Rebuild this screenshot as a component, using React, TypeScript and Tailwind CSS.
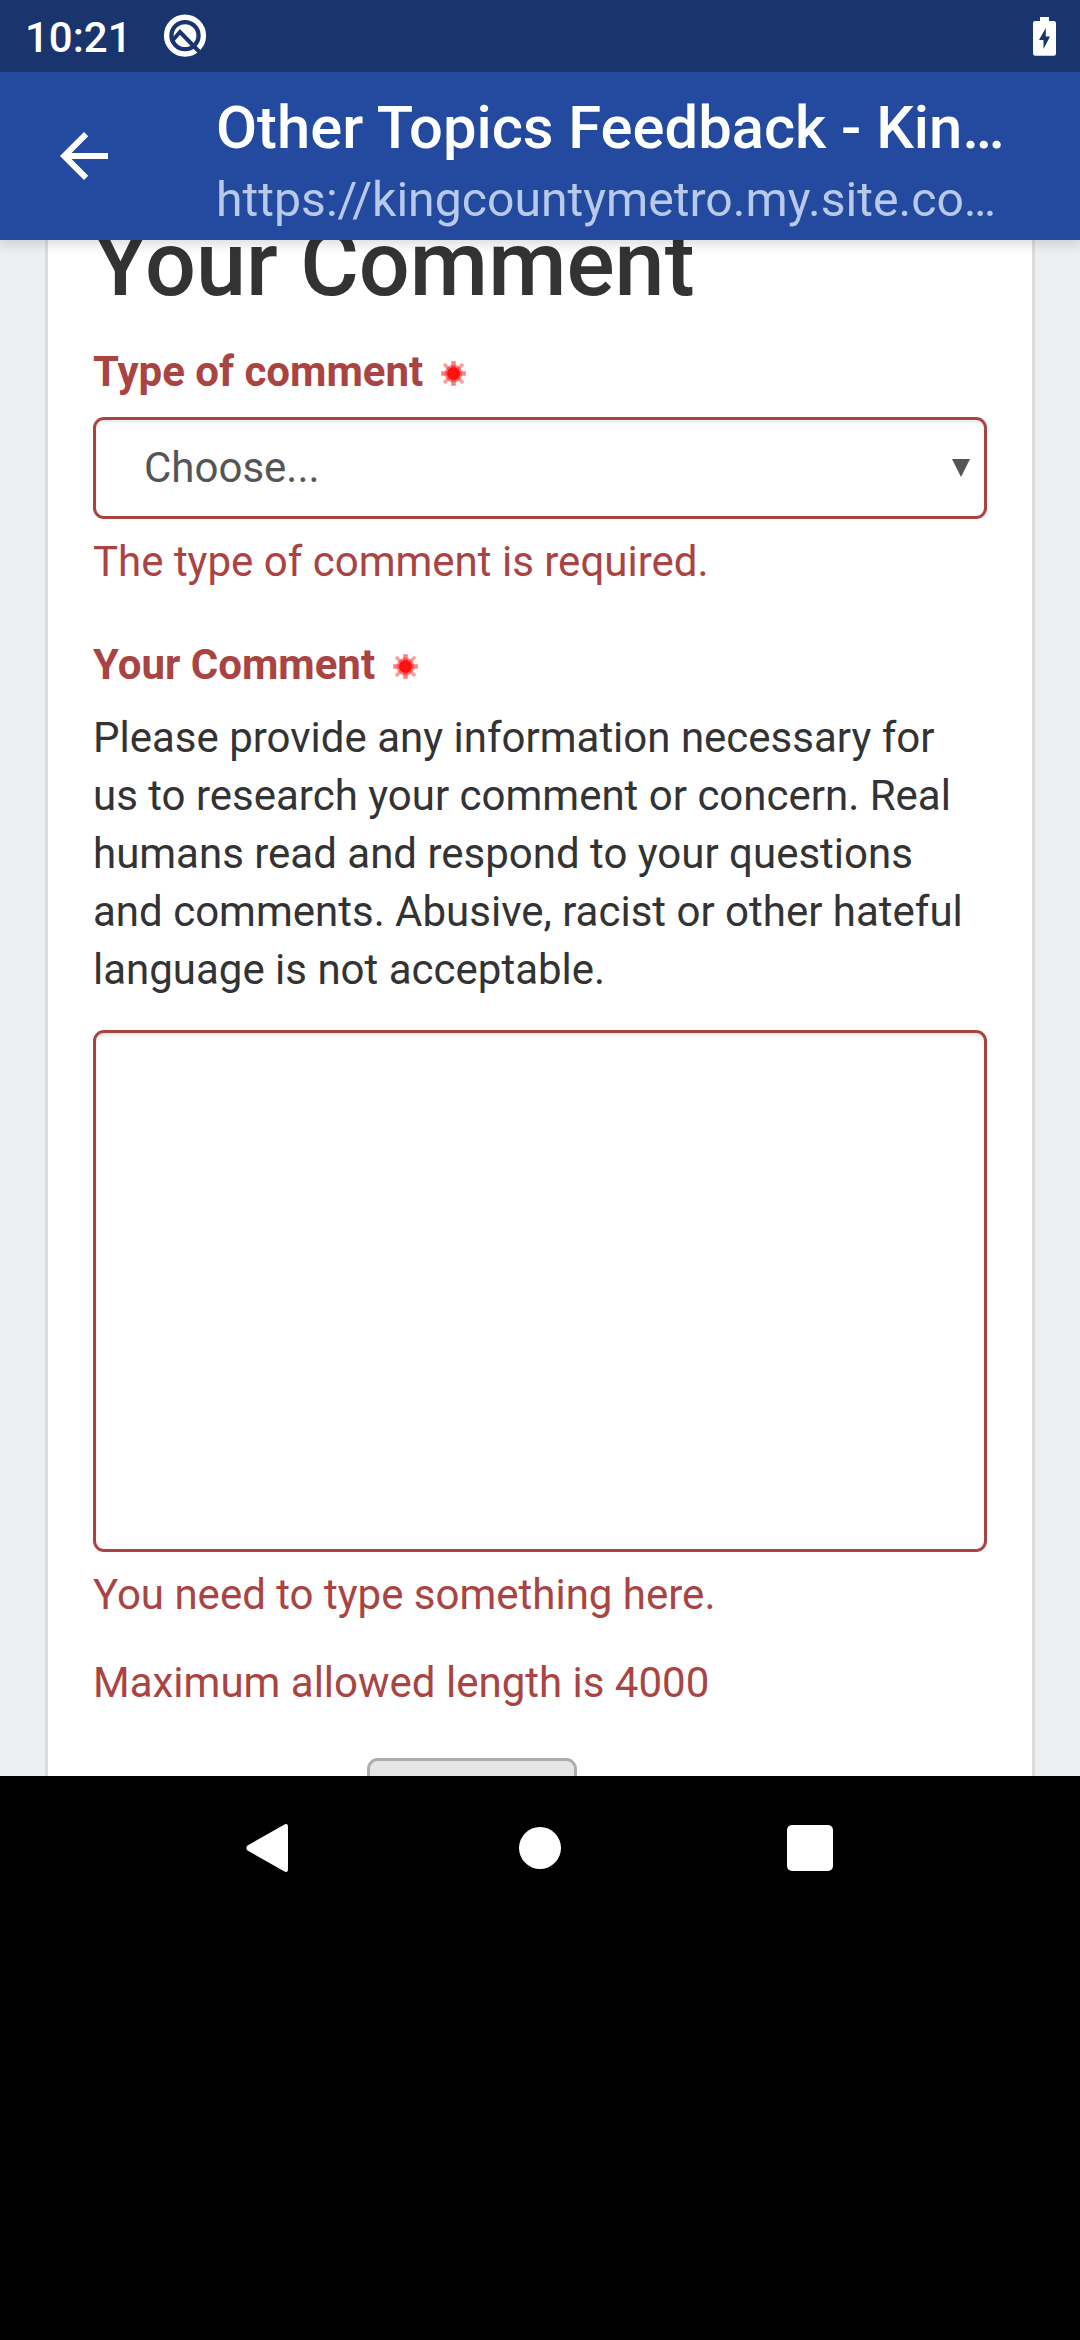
import type { ReactNode } from 'react';

function AndroidQIcon() {
  return (
    <svg className="h-11 w-11" viewBox="0 0 44 44" fill="none">
      <circle cx="22" cy="21.600" r="18.400" stroke="#fff" strokeWidth="5.400" />
      <circle cx="22" cy="21.600" r="11.400" fill="#fff" />
      <path d="M9.500 26.500 L17 18 L37 38.500" stroke="#1a356d" strokeWidth="4" />
    </svg>
  );
}

function BatteryIcon() {
  return (
    <svg className="h-[39px] w-[23px]" viewBox="0 0 23 39">
      <path
        fill="#fff"
        d="M7 0h9v4h4.800a2.200 2.200 0 0 1 2.200 2.200v30.300a2.300 2.300 0 0 1-2.300 2.300H2.300A2.300 2.300 0 0 1 0 36.500V6.200A2.200 2.200 0 0 1 2.200 4H7z"
      />
      <path fill="#1a356d" d="M12.800 11v8.500H17L10.500 32v-9H6z" />
    </svg>
  );
}

function BackArrow() {
  return (
    <svg className="h-[72px] w-[72px] self-center" viewBox="0 0 24 24" fill="#fff">
      <path d="M20 11H7.830l5.590-5.590L12 4l-8 8 8 8 1.410-1.410L7.830 13H20v-2z" />
    </svg>
  );
}

function RequiredMark() {
  return (
    <svg className="ml-[17px] mt-[3px] h-[27px] w-[27px]" viewBox="0 0 27 27">
      <g stroke="#ff2a2a">
        <path strokeWidth="4.600" opacity="0.600" d="M13.500 1.200v24.600M1.200 13.500h24.600" />
        <path strokeWidth="3.600" opacity="0.450" d="M4 4l19 19M23 4L4 23" />
      </g>
      <circle cx="13.500" cy="13.500" r="8.800" fill="#ff3030" opacity="0.600" />
      <circle cx="13.500" cy="13.500" r="6.500" fill="#ff1010" />
    </svg>
  );
}

function FieldLabel({ children }: { children: ReactNode }) {
  return (
    <label className="flex items-center font-bold text-[#a94442]">
      {children}
      <RequiredMark />
    </label>
  );
}

export default function App() {
  return (
    <div className="flex h-[2340px] w-[1080px] flex-col overflow-hidden bg-black font-[Roboto,sans-serif]">
      <div className="relative z-20 flex h-[72px] shrink-0 items-center bg-[#1a356d] pl-[25px] pr-6 text-white">
        <span className="w-[104px] pt-[3px] text-[42px] font-medium leading-none">10:21</span>
        <div className="ml-[34px]">
          <AndroidQIcon />
        </div>
        <div className="ml-auto">
          <BatteryIcon />
        </div>
      </div>

      <header className="relative z-10 flex h-[168px] shrink-0 items-start bg-[#234a9e] pl-12 shadow-[0_2px_12px_2px_rgba(0,0,0,0.150)]">
        <BackArrow />
        <div className="ml-24 flex flex-col whitespace-nowrap pt-[19px]">
          <div className="text-[59.700px] font-medium leading-[74px] text-white">Other Topics Feedback - Kin…</div>
          <div className="mt-[2px] text-[48.150px] leading-[66px] text-[#b9c9ea]">https://kingcountymetro.my.site.co…</div>
        </div>
      </header>

      <main className="h-[1536px] shrink-0 overflow-hidden bg-[#eeeff2] px-[45px]">
        <div className="flow-root h-full border-x-[3px] border-[#dcdcdd] bg-white px-[45px] text-[42px] leading-[58px] text-[#333]">
          <h1 className="-mt-[24px] text-[89.900px] font-medium leading-[98px]">Your Comment</h1>

          <div className="mt-[29px]">
            <FieldLabel>Type of comment</FieldLabel>
            <div className="mt-4 flex h-[102px] items-center justify-between rounded-[11px] border-[3px] border-[#a94442] pl-[48px] pr-[14px] text-[#555] shadow-[inset_0_3px_3px_rgba(0,0,0,0.075)]">
              <span>Choose...</span>
              <svg className="h-[18px] w-[18px]" viewBox="0 0 18 18">
                <path fill="#555" d="M0 0h18L9 18z" />
              </svg>
            </div>
            <p className="mt-[14px] text-[#a94442]">The type of comment is required.</p>
          </div>

          <div className="mt-[45px]">
            <FieldLabel>Your Comment</FieldLabel>
            <p className="mt-[15px] whitespace-nowrap">
              Please provide any information necessary for
              <br />
              us to research your comment or concern. Real
              <br />
              humans read and respond to your questions
              <br />
              and comments. Abusive, racist or other hateful
              <br />
              language is not acceptable.
            </p>
            <textarea className="mt-[31px] block h-[522px] w-full resize-none rounded-[11px] border-[3px] border-[#a94442] bg-white shadow-[inset_0_3px_3px_rgba(0,0,0,0.075)] outline-none" />
            <p className="mt-[14px] text-[#a94442]">You need to type something here.</p>
            <p className="mt-[30px] text-[#a94442]">Maximum allowed length is 4000</p>
          </div>

          <div className="ml-[274px] mt-[46px] h-[90px] w-[210px] rounded-[11px] border-[3px] border-[#adadad] bg-[#e6e6e6]" />
        </div>
      </main>

      <nav className="flex h-36 shrink-0 items-center pl-[246px]">
        <svg className="h-12 w-[42px]" viewBox="0 0 42 48" fill="#fff">
          <path d="M38.500 0.500 Q42 -1 42 3 V45 Q42 49 38.500 47.500 L1.500 26.500 Q-1 24 1.500 21.500 Z" />
        </svg>
        <div className="ml-[231px] h-[42px] w-[42px] rounded-full bg-white" />
        <div className="ml-[226px] h-[46px] w-[46px] rounded-[5px] bg-white" />
      </nav>
    </div>
  );
}
